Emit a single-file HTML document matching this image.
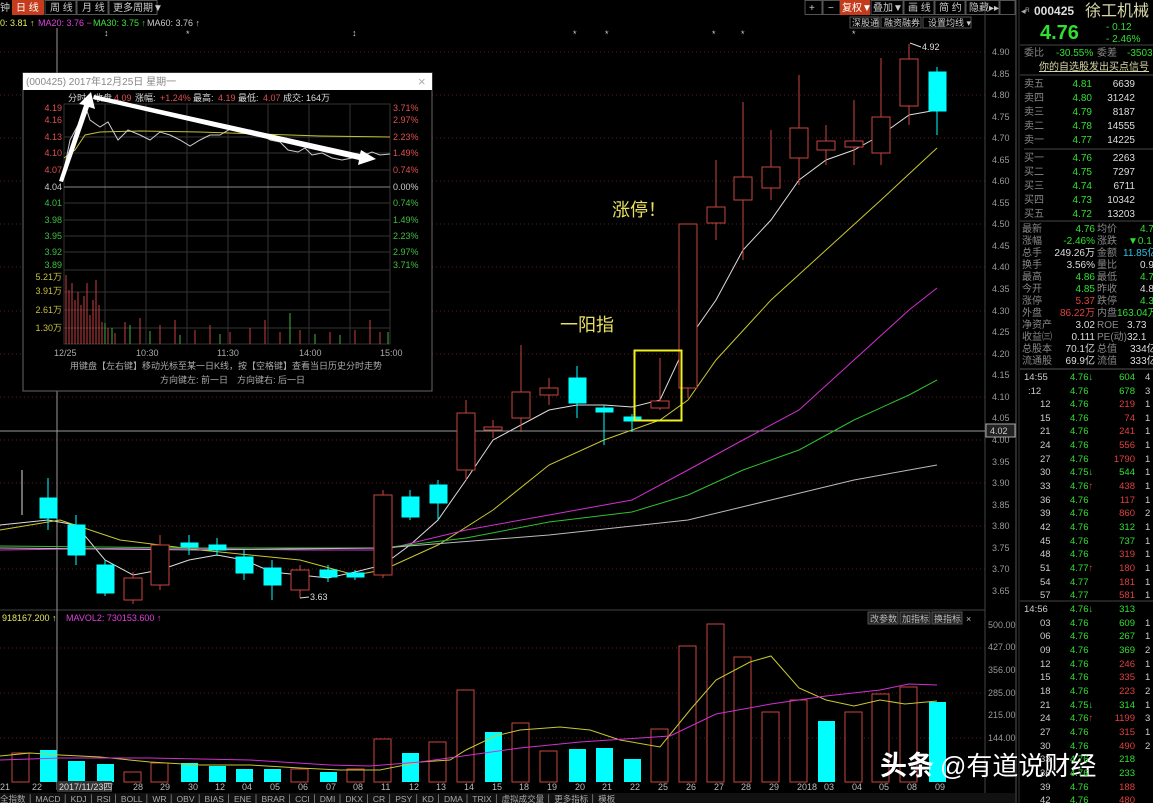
<!DOCTYPE html>
<html><head><meta charset="utf-8"><style>
body{margin:0;background:#000;width:1153px;height:803px;overflow:hidden;font-family:"Liberation Sans","Noto Sans CJK SC",sans-serif}
svg{position:absolute;left:0;top:0}
text{font-family:"Liberation Sans","Noto Sans CJK SC",sans-serif}
</style></head><body>
<svg width="1153" height="803" viewBox="0 0 1153 803">
<!-- toolbar -->
<rect x="0" y="0" width="1015" height="16" fill="#000"/>
<g font-size="10" fill="#ccc">
<text x="0" y="11">钟</text>
<rect x="12" y="0" width="32" height="15" fill="#c43c1c"/><text x="16" y="11" fill="#fff">日 线</text>
<rect x="45" y="0.5" width="31" height="14" fill="none" stroke="#555"/><text x="50" y="11">周 线</text>
<rect x="77" y="0.5" width="31" height="14" fill="none" stroke="#555"/><text x="82" y="11">月 线</text>
<rect x="109" y="0.5" width="48" height="14" fill="none" stroke="#555"/><text x="113" y="11">更多周期▼</text>
<rect x="805" y="0.5" width="17" height="14" fill="none" stroke="#555"/><text x="809" y="11">+</text>
<rect x="823" y="0.5" width="17" height="14" fill="none" stroke="#555"/><text x="828" y="11">−</text>
<rect x="840" y="0" width="30" height="15" fill="#c43c1c"/><text x="842" y="11" fill="#fff">复权▼</text>
<rect x="871" y="0.5" width="32" height="14" fill="none" stroke="#555"/><text x="873" y="11">叠加▼</text>
<rect x="904" y="0.5" width="30" height="14" fill="none" stroke="#555"/><text x="908" y="11">画 线</text>
<rect x="935" y="0.5" width="30" height="14" fill="none" stroke="#555"/><text x="939" y="11">简 约</text>
<rect x="966" y="0.5" width="33" height="14" fill="none" stroke="#555"/><text x="969" y="11">隐藏▸▸</text>
<rect x="1000" y="0.5" width="15" height="14" fill="none" stroke="#555"/>
<rect x="850" y="17" width="29" height="11" fill="none" stroke="#555"/><text x="852" y="26" font-size="9">深股通</text>
<rect x="881" y="17" width="40" height="11" fill="none" stroke="#555"/><text x="884" y="26" font-size="9">融资融券</text>
<rect x="923" y="17" width="48" height="11" fill="none" stroke="#555"/><text x="928" y="26" font-size="9">设置均线 ▾</text>
</g>
<text y="26" font-size="9"><tspan x="0" fill="#e8e860">0: 3.81 ↑</tspan><tspan x="38" fill="#e040e0">MA20: 3.76 −</tspan><tspan x="93" fill="#40e040">MA30: 3.75 ↑</tspan><tspan x="147" fill="#ccc">MA60: 3.76 ↑</tspan></text>
<g fill="#ccc" font-size="9"><text x="104" y="36">↕</text><text x="186" y="37">*</text><text x="352" y="36">↕</text><text x="573" y="37">*</text><text x="605" y="37">*</text><text x="712" y="37">*</text><text x="741" y="37">*</text><text x="852" y="37">*</text></g>
<!-- grid -->
<g stroke="#5a1a1a" stroke-dasharray="1 3">
<line x1="0" y1="52" x2="985" y2="52"/><line x1="0" y1="95" x2="985" y2="95"/><line x1="0" y1="138" x2="985" y2="138"/><line x1="0" y1="181" x2="985" y2="181"/><line x1="0" y1="224" x2="985" y2="224"/><line x1="0" y1="267" x2="985" y2="267"/><line x1="0" y1="311" x2="985" y2="311"/><line x1="0" y1="354" x2="985" y2="354"/><line x1="0" y1="397" x2="985" y2="397"/><line x1="0" y1="440" x2="985" y2="440"/><line x1="0" y1="483" x2="985" y2="483"/><line x1="0" y1="526" x2="985" y2="526"/><line x1="0" y1="569" x2="985" y2="569"/>
<line x1="0" y1="648" x2="985" y2="648"/><line x1="0" y1="693" x2="985" y2="693"/><line x1="0" y1="738" x2="985" y2="738"/>
</g>
<line x1="0" y1="610" x2="985" y2="610" stroke="#444"/>
<line x1="985" y1="0" x2="985" y2="795" stroke="#444"/>
<line x1="1016" y1="0" x2="1016" y2="803" stroke="#555"/>
<line x1="1019" y1="0" x2="1019" y2="803" stroke="#333"/>
<!-- crosshair -->
<line x1="57" y1="28" x2="57" y2="790" stroke="#999"/>
<line x1="0" y1="431" x2="985" y2="431" stroke="#999"/>
<rect x="986" y="424" width="29" height="13" fill="#222" stroke="#aaa"/>
<text x="990" y="434" font-size="9" fill="#ccc">4.02</text>
<!-- price axis -->
<g font-size="9" fill="#999">
<text x="992" y="55">4.90</text><text x="992" y="77">4.85</text><text x="992" y="98">4.80</text><text x="992" y="120">4.75</text><text x="992" y="141">4.70</text><text x="992" y="163">4.65</text><text x="992" y="184">4.60</text><text x="992" y="206">4.55</text><text x="992" y="227">4.50</text><text x="992" y="249">4.45</text><text x="992" y="270">4.40</text><text x="992" y="292">4.35</text><text x="992" y="314">4.30</text><text x="992" y="335">4.25</text><text x="992" y="357">4.20</text><text x="992" y="378">4.15</text><text x="992" y="400">4.10</text><text x="992" y="421">4.05</text><text x="992" y="443">4.00</text><text x="992" y="465">3.95</text><text x="992" y="486">3.90</text><text x="992" y="508">3.85</text><text x="992" y="529">3.80</text><text x="992" y="551">3.75</text><text x="992" y="572">3.70</text><text x="992" y="594">3.65</text>
<text x="988" y="628">500.00</text><text x="988" y="650">427.00</text><text x="988" y="673">356.00</text><text x="988" y="696">285.00</text><text x="988" y="718">215.00</text><text x="988" y="741">144.00</text>
</g>
<!-- MA lines -->
<g fill="none" stroke-width="1">
<polyline stroke="#ddd" points="0,525 48,520 76,525 105,560 133,575 160,570 189,560 217,555 244,560 272,572 300,575 328,578 355,572 383,565 410,545 438,520 466,480 493,440 521,425 549,410 577,405 604,405 632,407 660,400 688,340 716,300 743,250 771,220 799,180 826,160 854,150 881,135 909,115 937,110"/>
<polyline stroke="#c8c830" points="0,530 60,520 120,540 200,550 300,560 355,575 383,570 438,545 493,510 549,465 604,440 660,420 688,400 716,360 771,300 826,250 881,200 937,148"/>
<polyline stroke="#d030d0" points="0,550 150,548 300,550 383,550 466,530 549,515 632,500 688,470 743,440 799,410 854,360 909,310 937,288"/>
<polyline stroke="#30c030" points="0,546 200,548 383,548 466,538 549,522 632,512 688,495 743,470 799,450 854,420 909,395 937,380"/>
<polyline stroke="#bbb" points="0,548 200,550 383,548 549,535 688,520 771,500 854,480 937,465"/>
</g>
<!-- candles -->
<g stroke="#c8463c" fill="#000">
<line x1="22" y1="470" x2="22" y2="515" stroke="#ddd"/>
<line x1="133" y1="572" x2="133" y2="604"/><rect x="124" y="578" width="18" height="22"/>
<line x1="160" y1="535" x2="160" y2="590"/><rect x="151" y="545" width="18" height="40"/>
<line x1="300" y1="565" x2="300" y2="598"/><rect x="291" y="570" width="18" height="20"/>
<line x1="383" y1="490" x2="383" y2="578"/><rect x="374" y="495" width="18" height="80"/>
<line x1="466" y1="400" x2="466" y2="480"/><rect x="457" y="413" width="18" height="57"/>
<line x1="493" y1="420" x2="493" y2="438"/><rect x="484" y="427" width="18" height="3"/>
<line x1="521" y1="345" x2="521" y2="432"/><rect x="512" y="392" width="18" height="26"/>
<line x1="549" y1="378" x2="549" y2="405"/><rect x="540" y="388" width="18" height="7"/>
<line x1="660" y1="358" x2="660" y2="410"/><rect x="651" y="401" width="18" height="7"/>
<line x1="688" y1="388" x2="688" y2="398"/><rect x="679" y="224" width="18" height="164"/>
<line x1="716" y1="160" x2="716" y2="240"/><rect x="707" y="207" width="18" height="16"/>
<line x1="743" y1="102" x2="743" y2="260"/><rect x="734" y="177" width="18" height="23"/>
<line x1="771" y1="130" x2="771" y2="200"/><rect x="762" y="167" width="18" height="21"/>
<line x1="799" y1="75" x2="799" y2="185"/><rect x="790" y="128" width="18" height="30"/>
<line x1="826" y1="125" x2="826" y2="165"/><rect x="817" y="141" width="18" height="9"/>
<line x1="854" y1="100" x2="854" y2="165"/><rect x="845" y="141" width="18" height="6"/>
<line x1="881" y1="58" x2="881" y2="165"/><rect x="872" y="117" width="18" height="36"/>
<line x1="909" y1="44" x2="909" y2="125"/><rect x="900" y="59" width="18" height="47"/>
</g>
<g fill="#00ffff" stroke="#00ffff">
<line x1="48" y1="478" x2="48" y2="530"/><rect x="40" y="498" width="17" height="20"/>
<line x1="76" y1="515" x2="76" y2="565"/><rect x="68" y="525" width="17" height="30"/>
<line x1="105" y1="560" x2="105" y2="596"/><rect x="97" y="565" width="17" height="28"/>
<line x1="189" y1="535" x2="189" y2="555"/><rect x="181" y="543" width="17" height="4"/>
<line x1="217" y1="538" x2="217" y2="556"/><rect x="209" y="545" width="17" height="5"/>
<line x1="244" y1="550" x2="244" y2="580"/><rect x="236" y="557" width="17" height="16"/>
<line x1="272" y1="560" x2="272" y2="600"/><rect x="264" y="568" width="17" height="17"/>
<line x1="328" y1="565" x2="328" y2="582"/><rect x="320" y="570" width="17" height="7"/>
<line x1="355" y1="570" x2="355" y2="580"/><rect x="347" y="573" width="17" height="4"/>
<line x1="410" y1="490" x2="410" y2="520"/><rect x="402" y="497" width="17" height="20"/>
<line x1="438" y1="480" x2="438" y2="520"/><rect x="430" y="485" width="17" height="18"/>
<line x1="577" y1="366" x2="577" y2="418"/><rect x="569" y="378" width="17" height="25"/>
<line x1="604" y1="405" x2="604" y2="445"/><rect x="596" y="408" width="17" height="4"/>
<line x1="632" y1="414" x2="632" y2="432"/><rect x="624" y="417" width="17" height="4"/>
<line x1="937" y1="67" x2="937" y2="135"/><rect x="929" y="72" width="17" height="39"/>
</g>
<text x="922" y="50" font-size="9" fill="#ddd">4.92</text><line x1="910" y1="43" x2="921" y2="47" stroke="#ddd"/>
<text x="310" y="600" font-size="9" fill="#ddd">3.63</text><line x1="300" y1="598" x2="309" y2="597" stroke="#ddd"/>
<rect x="634.5" y="350.5" width="47" height="70" fill="none" stroke="#f0f020" stroke-width="2"/>
<text x="612" y="216" font-size="18" fill="#e8e060">涨停！</text>
<text x="560" y="331" font-size="18" fill="#e8e060">一阳指</text>
<!-- volume pane -->
<text y="621" font-size="9"><tspan x="2" fill="#e8e860">918167.200 ↑</tspan><tspan x="66" fill="#e040e0">MAVOL2: 730153.600 ↑</tspan></text>
<g font-size="9" fill="#bbb"><rect x="868" y="612" width="30" height="12" fill="#222" stroke="#555"/><text x="870" y="622">改参数</text><rect x="900" y="612" width="30" height="12" fill="#222" stroke="#555"/><text x="902" y="622">加指标</text><rect x="932" y="612" width="30" height="12" fill="#222" stroke="#555"/><text x="934" y="622">换指标</text><text x="966" y="622">×</text></g>
<g stroke="#c8463c" fill="#000">
<rect x="12" y="753" width="17" height="29"/><rect x="124" y="772" width="17" height="10"/><rect x="151" y="763" width="17" height="19"/><rect x="291" y="769" width="17" height="13"/><rect x="347" y="769" width="17" height="13"/><rect x="374" y="739" width="17" height="43"/><rect x="429" y="742" width="17" height="40"/><rect x="457" y="690" width="17" height="92"/><rect x="512" y="723" width="17" height="59"/><rect x="540" y="751" width="17" height="31"/><rect x="651" y="729" width="17" height="53"/><rect x="679" y="646" width="17" height="136"/><rect x="707" y="624" width="17" height="158"/><rect x="734" y="657" width="17" height="125"/><rect x="762" y="712" width="17" height="70"/><rect x="790" y="700" width="17" height="82"/><rect x="845" y="712" width="17" height="70"/><rect x="872" y="694" width="17" height="88"/><rect x="900" y="687" width="17" height="95"/>
</g>
<g fill="#00ffff">
<rect x="40" y="750" width="17" height="32"/><rect x="68" y="761" width="17" height="21"/><rect x="97" y="764" width="17" height="18"/><rect x="181" y="763" width="17" height="19"/><rect x="209" y="766" width="17" height="16"/><rect x="236" y="769" width="17" height="13"/><rect x="264" y="769" width="17" height="13"/><rect x="320" y="772" width="17" height="10"/><rect x="402" y="753" width="17" height="29"/><rect x="485" y="732" width="17" height="50"/><rect x="569" y="749" width="17" height="33"/><rect x="596" y="748" width="17" height="34"/><rect x="624" y="759" width="17" height="23"/><rect x="818" y="721" width="17" height="61"/><rect x="929" y="702" width="17" height="80"/>
</g>
<polyline fill="none" stroke="#c8c830" points="0,756 30,753 60,755 100,757 150,762 200,765 250,765 300,768 340,770 380,770 420,762 450,760 466,750 495,736 520,730 560,727 590,730 620,740 660,747 690,710 716,680 750,662 771,656 799,688 826,700 854,706 880,700 905,704 937,701"/>
<polyline fill="none" stroke="#d030d0" points="0,760 60,758 150,758 250,760 330,765 370,766 420,762 470,755 520,748 580,742 640,738 670,736 716,714 771,704 826,696 880,690 909,684 937,685"/>
<g font-size="9" fill="#bbb">
<text x="0" y="790">21</text><text x="32" y="790">22</text><text x="108" y="790">7</text><text x="133" y="790">28</text><text x="160" y="790">29</text><text x="188" y="790">30</text><text x="215" y="790">12</text><text x="242" y="790">04</text><text x="270" y="790">05</text><text x="298" y="790">06</text><text x="326" y="790">07</text><text x="353" y="790">08</text><text x="381" y="790">11</text><text x="409" y="790">12</text><text x="436" y="790">13</text><text x="464" y="790">14</text><text x="492" y="790">15</text><text x="519" y="790">18</text><text x="547" y="790">19</text><text x="575" y="790">20</text><text x="602" y="790">21</text><text x="630" y="790">22</text><text x="658" y="790">25</text><text x="686" y="790">26</text><text x="714" y="790">27</text><text x="741" y="790">28</text><text x="769" y="790">29</text><text x="797" y="790">2018</text><text x="824" y="790">03</text><text x="852" y="790">04</text><text x="879" y="790">05</text><text x="907" y="790">08</text><text x="935" y="790">09</text>
</g>
<rect x="57" y="781" width="55" height="11" fill="#333"/><text x="59" y="790" font-size="9" fill="#ddd">2017/11/23四</text>
<rect x="0" y="793" width="1015" height="10" fill="#111"/>
<text x="0" y="802" font-size="8.5" fill="#aaa" xml:space="preserve">全指数 │ MACD │ KDJ │ RSI │ BOLL │ WR │ OBV │ BIAS │ ENE │ BRAR │ CCI │ DMI │ DKX │ CR │ PSY │ KD │ DMA │ TRIX │ 虚拟成交量 │ 更多指标 │ 模板</text>
<text x="880" y="775" font-size="27" fill="#fff" font-weight="bold">头条</text>
<text x="940" y="775" font-size="26" fill="#fff">@有道说财经</text>
<!-- inset popup -->
<rect x="23" y="73" width="409" height="318" fill="#000" stroke="#666"/>
<rect x="23" y="73" width="409" height="17" fill="#fff"/>
<text x="26" y="85" font-size="10" fill="#888">(000425) 2017年12月25日 星期一</text>
<text x="418" y="86" font-size="13" fill="#aaa">×</text>
<text y="101" font-size="9"><tspan x="68" fill="#ddd">分时</tspan><tspan x="94" fill="#ddd">收盘</tspan><tspan x="114" fill="#e05050">4.09</tspan><tspan x="135" fill="#ddd">涨幅:</tspan><tspan x="160" fill="#e05050">+1.24%</tspan><tspan x="193" fill="#ddd">最高:</tspan><tspan x="218" fill="#e05050">4.19</tspan><tspan x="238" fill="#ddd">最低:</tspan><tspan x="263" fill="#e05050">4.07</tspan><tspan x="283" fill="#ddd">成交: 164万</tspan></text>
<g stroke="#333" fill="none">
<rect x="64" y="104" width="326" height="240"/>
<line x1="64" y1="137" x2="390" y2="137"/><line x1="64" y1="153" x2="390" y2="153"/><line x1="64" y1="170" x2="390" y2="170"/><line x1="64" y1="203" x2="390" y2="203"/><line x1="64" y1="220" x2="390" y2="220"/><line x1="64" y1="236" x2="390" y2="236"/><line x1="64" y1="252" x2="390" y2="252"/><line x1="64" y1="270" x2="390" y2="270"/>
<line x1="105" y1="104" x2="105" y2="344"/><line x1="146" y1="104" x2="146" y2="344"/><line x1="187" y1="104" x2="187" y2="344"/><line x1="228" y1="104" x2="228" y2="344"/><line x1="268" y1="104" x2="268" y2="344"/><line x1="309" y1="104" x2="309" y2="344"/><line x1="350" y1="104" x2="350" y2="344"/>
<line x1="64" y1="292" x2="390" y2="292"/><line x1="64" y1="310" x2="390" y2="310"/><line x1="64" y1="328" x2="390" y2="328"/>
</g>
<line x1="64" y1="187" x2="390" y2="187" stroke="#888"/>
<g font-size="9" text-anchor="end"><text x="62" y="111" fill="#e05050">4.19</text><text x="62" y="123" fill="#e05050">4.16</text><text x="62" y="140" fill="#e05050">4.13</text><text x="62" y="156" fill="#e05050">4.10</text><text x="62" y="173" fill="#e05050">4.07</text><text x="62" y="190" fill="#ccc">4.04</text><text x="62" y="206" fill="#40c040">4.01</text><text x="62" y="223" fill="#40c040">3.98</text><text x="62" y="239" fill="#40c040">3.95</text><text x="62" y="255" fill="#40c040">3.92</text><text x="62" y="268" fill="#40c040">3.89</text>
<text x="62" y="280" fill="#c8c040">5.21万</text><text x="62" y="294" fill="#c8c040">3.91万</text><text x="62" y="313" fill="#c8c040">2.61万</text><text x="62" y="331" fill="#c8c040">1.30万</text></g>
<g font-size="9"><text x="393" y="111" fill="#e05050">3.71%</text><text x="393" y="123" fill="#e05050">2.97%</text><text x="393" y="140" fill="#e05050">2.23%</text><text x="393" y="156" fill="#e05050">1.49%</text><text x="393" y="173" fill="#e05050">0.74%</text><text x="393" y="190" fill="#ccc">0.00%</text><text x="393" y="206" fill="#40c040">0.74%</text><text x="393" y="223" fill="#40c040">1.49%</text><text x="393" y="239" fill="#40c040">2.23%</text><text x="393" y="255" fill="#40c040">2.97%</text><text x="393" y="268" fill="#40c040">3.71%</text></g>
<polyline fill="none" stroke="#c8c030" points="64,158 75,150 85,135 100,132 140,131 200,132 260,134 320,136 390,137"/>
<polyline fill="none" stroke="#ccc" points="64,170 70,140 78,125 85,105 90,120 100,127 108,122 118,140 128,130 140,135 150,140 160,132 170,135 180,140 190,146 200,140 210,135 220,135 232,128 240,132 250,130 260,133 270,140 280,142 288,150 298,152 305,148 312,155 322,153 332,158 342,160 352,158 362,156 372,152 380,155 390,154"/>
<g stroke="#c84040"><path d="M66 344V275M69 344V290M72 344V283M75 344V300M78 344V292M81 344V305M84 344V296M87 344V283M90 344V315M93 344V300M96 344V280M99 344V305M102 344V322M108 344V328M115 344V333M125 344V322M140 344V318M160 344V325M175 344V320M195 344V330M210 344V325M230 344V332M250 344V328M265 344V320M280 344V332M300 344V330M330 344V332M355 344V330M370 344V320M380 344V332"/></g>
<g stroke="#40b040"><path d="M105 344V323M112 344V328M130 344V325M150 344V331M180 344V335M220 344V334M290 344V313M315 344V334M340 344V335M388 344V332"/></g>
<g font-size="9" fill="#aaa"><text x="54" y="356">12/25</text><text x="136" y="356">10:30</text><text x="217" y="356">11:30</text><text x="299" y="356">14:00</text><text x="380" y="356">15:00</text></g>
<text x="70" y="369" font-size="9" fill="#aaa">用键盘【左右键】移动光标至某一日K线，按【空格键】查看当日历史分时走势</text>
<text x="160" y="383" font-size="9" fill="#aaa">方向键左: 前一日　方向键右: 后一日</text>
<polygon fill="#fff" points="59,181 84,105 79,104 91,92 95,109 89,107 63,182"/>
<polygon fill="#fff" points="94,95 360,154 361,150 376,159 358,165 359,160 93,99"/>
<!-- right panel -->
<g font-size="11">
<text x="1021" y="14" fill="#aaa" font-size="9">◂ᴿ</text>
<text x="1034" y="15" fill="#ddd" font-weight="bold" font-size="12">000425</text>
<text x="1085" y="16" fill="#d8d8a8" font-size="16">徐工机械</text>
<text x="1040" y="39" fill="#30e030" font-size="20" font-weight="bold">4.76</text>
<text x="1106" y="30" fill="#30e030" font-size="10">- 0.12</text>
<text x="1106" y="42" fill="#30e030" font-size="10">- 2.46%</text>
<line x1="1020" y1="45" x2="1153" y2="45" stroke="#444"/>
<g font-size="10"><text x="1024" y="56" fill="#888">委比</text><text x="1056" y="56" fill="#30e030">-30.55%</text><text x="1097" y="56" fill="#888">委差</text><text x="1127" y="56" fill="#30e030">-3503</text></g>
<text x="1039" y="70" fill="#d8d8a8" font-size="10" text-decoration="underline">你的自选股发出买点信号</text>
<line x1="1020" y1="75" x2="1153" y2="75" stroke="#444"/>
<g font-size="10" fill="#888"><text x="1024" y="87">卖五</text><text x="1024" y="101">卖四</text><text x="1024" y="115">卖三</text><text x="1024" y="129">卖二</text><text x="1024" y="143">卖一</text><text x="1024" y="161">买一</text><text x="1024" y="175">买二</text><text x="1024" y="189">买三</text><text x="1024" y="203">买四</text><text x="1024" y="217">买五</text></g>
<g font-size="10" fill="#30e030" text-anchor="end"><text x="1092" y="87">4.81</text><text x="1092" y="101">4.80</text><text x="1092" y="115">4.79</text><text x="1092" y="129">4.78</text><text x="1092" y="143">4.77</text><text x="1092" y="161">4.76</text><text x="1092" y="175">4.75</text><text x="1092" y="189">4.74</text><text x="1092" y="203">4.73</text><text x="1092" y="217">4.72</text></g>
<g font-size="10" fill="#ddd" text-anchor="end"><text x="1135" y="87">6639</text><text x="1135" y="101">31242</text><text x="1135" y="115">8187</text><text x="1135" y="129">14555</text><text x="1135" y="143">14225</text><text x="1135" y="161">2263</text><text x="1135" y="175">7297</text><text x="1135" y="189">6711</text><text x="1135" y="203">10342</text><text x="1135" y="217">13203</text></g>
<line x1="1024" y1="149" x2="1153" y2="149" stroke="#444"/>
<line x1="1020" y1="221" x2="1153" y2="221" stroke="#444"/>
<g font-size="10" fill="#888"><text x="1022" y="232">最新</text><text x="1022" y="244">涨幅</text><text x="1022" y="256">总手</text><text x="1022" y="268">换手</text><text x="1022" y="280">最高</text><text x="1022" y="292">今开</text><text x="1022" y="304">涨停</text><text x="1022" y="316">外盘</text><text x="1022" y="328">净资产</text><text x="1022" y="340">收益㈢</text><text x="1022" y="352">总股本</text><text x="1022" y="364">流通股</text>
<text x="1097" y="232">均价</text><text x="1097" y="244">涨跌</text><text x="1097" y="256">金额</text><text x="1097" y="268">量比</text><text x="1097" y="280">最低</text><text x="1097" y="292">昨收</text><text x="1097" y="304">跌停</text><text x="1097" y="316">内盘</text><text x="1097" y="328">ROE</text><text x="1097" y="340">PE(动)</text><text x="1097" y="352">总值</text><text x="1097" y="364">流值</text></g>
<g font-size="10" text-anchor="end"><text x="1095" y="232" fill="#30e030">4.76</text><text x="1095" y="244" fill="#30e030">-2.46%</text><text x="1095" y="256" fill="#ddd">249.26万</text><text x="1095" y="268" fill="#ddd">3.56%</text><text x="1095" y="280" fill="#30e030">4.86</text><text x="1095" y="292" fill="#30e030">4.85</text><text x="1095" y="304" fill="#e04040">5.37</text><text x="1095" y="316" fill="#e04040">86.22万</text><text x="1095" y="328" fill="#ddd">3.02</text><text x="1095" y="340" fill="#ddd">0.111</text><text x="1095" y="352" fill="#ddd">70.1亿</text><text x="1095" y="364" fill="#ddd">69.9亿</text></g>
<g font-size="10"><text x="1140" y="232" fill="#30e030">4.7</text><text x="1128" y="244" fill="#30e030">▼0.1</text><text x="1123" y="256" fill="#30c0e0">11.85亿</text><text x="1140" y="268" fill="#ddd">0.9</text><text x="1140" y="280" fill="#30e030">4.7</text><text x="1140" y="292" fill="#ddd">4.8</text><text x="1140" y="304" fill="#30e030">4.3</text><text x="1117" y="316" fill="#30e030">163.04万</text><text x="1127" y="328" fill="#ddd">3.73</text><text x="1127" y="340" fill="#ddd">32.1</text><text x="1130" y="352" fill="#ddd">334亿</text><text x="1130" y="364" fill="#ddd">333亿</text></g>
<line x1="1020" y1="369" x2="1153" y2="369" stroke="#555"/>
</g>
<g font-size="9.5">
<g fill="#ccc"><text x="1024" y="380">14:55</text><text x="1028" y="394">:12</text><text x="1040" y="407">12</text><text x="1040" y="421">15</text><text x="1040" y="434">21</text><text x="1040" y="448">24</text><text x="1040" y="462">27</text><text x="1040" y="475">30</text><text x="1040" y="489">33</text><text x="1040" y="503">36</text><text x="1040" y="516">39</text><text x="1040" y="530">42</text><text x="1040" y="544">45</text><text x="1040" y="557">48</text><text x="1040" y="571">51</text><text x="1040" y="585">54</text><text x="1040" y="598">57</text><text x="1024" y="612">14:56</text><text x="1040" y="626">03</text><text x="1040" y="639">06</text><text x="1040" y="653">09</text><text x="1040" y="667">12</text><text x="1040" y="680">15</text><text x="1040" y="694">18</text><text x="1040" y="708">21</text><text x="1040" y="721">24</text><text x="1040" y="735">27</text><text x="1040" y="749">30</text><text x="1040" y="762">33</text><text x="1040" y="776">36</text><text x="1040" y="790">39</text><text x="1040" y="803">42</text></g>
<g fill="#30e030"><text x="1070" y="380">4.76↓</text><text x="1070" y="394">4.76</text><text x="1070" y="407">4.76</text><text x="1070" y="421">4.76</text><text x="1070" y="434">4.76</text><text x="1070" y="448">4.76</text><text x="1070" y="462">4.76</text><text x="1070" y="475">4.75↓</text><text x="1070" y="489">4.76<tspan fill="#e04040">↑</tspan></text><text x="1070" y="503">4.76</text><text x="1070" y="516">4.76</text><text x="1070" y="530">4.76</text><text x="1070" y="544">4.76</text><text x="1070" y="557">4.76</text><text x="1070" y="571">4.77<tspan fill="#e04040">↑</tspan></text><text x="1070" y="585">4.77</text><text x="1070" y="598">4.77</text><text x="1070" y="612">4.76↓</text><text x="1070" y="626">4.76</text><text x="1070" y="639">4.76</text><text x="1070" y="653">4.76</text><text x="1070" y="667">4.76</text><text x="1070" y="680">4.76</text><text x="1070" y="694">4.76</text><text x="1070" y="708">4.75↓</text><text x="1070" y="721">4.76<tspan fill="#e04040">↑</tspan></text><text x="1070" y="735">4.76</text><text x="1070" y="749">4.76</text><text x="1070" y="762">4.76</text><text x="1070" y="776">4.76</text><text x="1070" y="790">4.76</text><text x="1070" y="803">4.76</text></g>
<g text-anchor="end"><text x="1135" y="380" fill="#30e030">604</text><text x="1135" y="394" fill="#30e030">678</text><text x="1135" y="407" fill="#e04040">219</text><text x="1135" y="421" fill="#e04040">74</text><text x="1135" y="434" fill="#e04040">241</text><text x="1135" y="448" fill="#e04040">556</text><text x="1135" y="462" fill="#e04040">1790</text><text x="1135" y="475" fill="#30e030">544</text><text x="1135" y="489" fill="#e04040">438</text><text x="1135" y="503" fill="#e04040">117</text><text x="1135" y="516" fill="#e04040">860</text><text x="1135" y="530" fill="#30e030">312</text><text x="1135" y="544" fill="#30e030">737</text><text x="1135" y="557" fill="#e04040">319</text><text x="1135" y="571" fill="#e04040">180</text><text x="1135" y="585" fill="#e04040">181</text><text x="1135" y="598" fill="#e04040">581</text><text x="1135" y="612" fill="#30e030">313</text><text x="1135" y="626" fill="#30e030">609</text><text x="1135" y="639" fill="#30e030">267</text><text x="1135" y="653" fill="#30e030">369</text><text x="1135" y="667" fill="#e04040">246</text><text x="1135" y="680" fill="#e04040">335</text><text x="1135" y="694" fill="#e04040">223</text><text x="1135" y="708" fill="#30e030">314</text><text x="1135" y="721" fill="#e04040">1199</text><text x="1135" y="735" fill="#e04040">315</text><text x="1135" y="749" fill="#e04040">490</text><text x="1135" y="762" fill="#30e030">218</text><text x="1135" y="776" fill="#30e030">233</text><text x="1135" y="790" fill="#e04040">188</text><text x="1135" y="803" fill="#e04040">480</text></g>
<g fill="#ccc"><text x="1145" y="380">4</text><text x="1145" y="394">3</text><text x="1145" y="407">1</text><text x="1145" y="421">1</text><text x="1145" y="434">1</text><text x="1145" y="448">1</text><text x="1145" y="462">1</text><text x="1145" y="475">1</text><text x="1145" y="489">1</text><text x="1145" y="503">1</text><text x="1145" y="516">2</text><text x="1145" y="530">1</text><text x="1145" y="544">1</text><text x="1145" y="557">1</text><text x="1145" y="571">1</text><text x="1145" y="585">1</text><text x="1145" y="598">1</text><text x="1145" y="626">1</text><text x="1145" y="639">1</text><text x="1145" y="653">2</text><text x="1145" y="667">1</text><text x="1145" y="680">1</text><text x="1145" y="694">2</text><text x="1145" y="708">1</text><text x="1145" y="721">3</text><text x="1145" y="735">1</text><text x="1145" y="749">2</text></g>
<line x1="1020" y1="601" x2="1153" y2="601" stroke="#444"/>
</g>
</svg>
</body></html>
